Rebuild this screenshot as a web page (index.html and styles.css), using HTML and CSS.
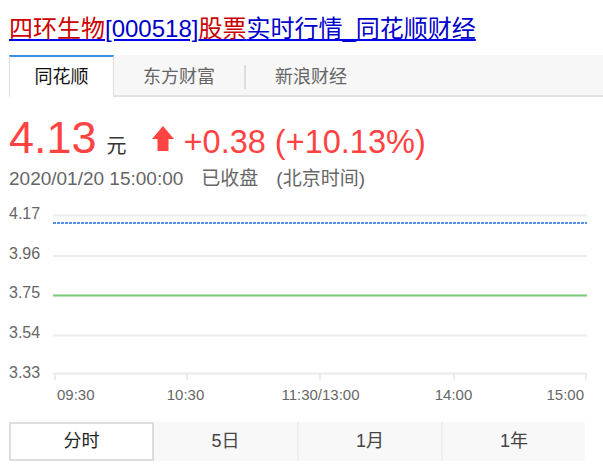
FILE: index.html
```html
<!DOCTYPE html>
<html lang="zh-CN">
<head>
<meta charset="utf-8">
<title>四环生物[000518]股票实时行情_同花顺财经</title>
<link rel="stylesheet" href="styles.css">
</head>
<body>
<div class="page">
  <div class="title-row"><a class="title" href="#"><span class="red">四环生物</span><span class="blue">[000518]</span><span class="red">股票</span><span class="blue">实时行情_同花顺财经</span></a></div>

  <div class="tabs">
    <div class="tab tab-active tab-1">同花顺</div>
    <div class="tab tab-2">东方财富</div>
    <div class="tab-sep"></div>
    <div class="tab tab-3">新浪财经</div>
  </div>

  <div class="price-row"><span class="price">4.13</span><span class="unit">元</span><svg class="arrow" width="22" height="25" viewBox="0 0 22 25"><path d="M11 0 L22 13 L16.5 13 L16.5 25 L5.5 25 L5.5 13 L0 13 Z" fill="#ff4343"/></svg><span class="change">+0.38 (+10.13%)</span></div>

  <div class="date-row"><span>2020/01/20 15:00:00</span><span class="gap">已收盘</span><span class="gap">(北京时间)</span></div>

  <svg class="chart" width="585" height="212" viewBox="0 0 585 212">
    <g class="grid">
      <line x1="44" y1="15.5" x2="578" y2="15.5"/>
      <line x1="44" y1="56" x2="578" y2="56"/>
      <line x1="44" y1="95.5" x2="578" y2="95.5"/>
      <line x1="44" y1="135.5" x2="578" y2="135.5"/>
      <line x1="44" y1="173.5" x2="578" y2="173.5"/>
      <line x1="46" y1="173" x2="46" y2="180"/>
      <line x1="178" y1="173" x2="178" y2="180"/>
      <line x1="311" y1="173" x2="311" y2="180"/>
      <line x1="445" y1="173" x2="445" y2="180"/>
      <line x1="577" y1="173" x2="577" y2="180"/>
    </g>
    <line class="limit" x1="44" y1="23" x2="578" y2="23"/>
    <line class="base" x1="44" y1="95.5" x2="578" y2="95.5"/>
    <g class="ylab">
      <text x="0" y="19">4.17</text>
      <text x="0" y="59">3.96</text>
      <text x="0" y="98">3.75</text>
      <text x="0" y="138">3.54</text>
      <text x="0" y="178">3.33</text>
    </g>
    <g class="xlab">
      <text x="48" y="200">09:30</text>
      <text x="176.5" y="200" text-anchor="middle">10:30</text>
      <text x="311.5" y="200" text-anchor="middle">11:30/13:00</text>
      <text x="444.5" y="200" text-anchor="middle">14:00</text>
      <text x="575" y="200" text-anchor="end">15:00</text>
    </g>
  </svg>

  <div class="periods">
    <div class="period period-active p1">分时</div>
    <div class="period p2">5日</div>
    <div class="period-sep"></div>
    <div class="period p3">1月</div>
    <div class="period-sep"></div>
    <div class="period p3">1年</div>
  </div>
</div>
</body>
</html>
```

FILE: styles.css
```css
html, body {
  margin: 0;
  padding: 0;
  background: #ffffff;
}
body {
  font-family: "Liberation Sans", Arial, "Noto Sans CJK SC", sans-serif;
  width: 603px;
  overflow: hidden;
}
.page {
  padding-left: 9px;
}
.title-row {
  padding-top: 14px;
  height: 30px;
  line-height: 30px;
  font-size: 24px;
  white-space: nowrap;
}
.title {
  text-decoration: underline;
}
.title .red {
  color: #cc0000;
}
.title .blue {
  color: #0000cc;
}

.tabs {
  margin-top: 11px;
  height: 40px;
  background: #f7f7f7;
  border-bottom: 2px solid #e2e2e2;
  display: flex;
  align-items: flex-start;
}
.tab {
  box-sizing: border-box;
  height: 42px;
  margin-bottom: -2px;
  border-top: 2px solid transparent;
  line-height: 41px;
  font-size: 18px;
  color: #666666;
  text-align: center;
  flex: none;
}
.tab-active {
  background: #ffffff;
  color: #111111;
  border-top: 2px solid #3b8fea;
  border-left: 1px solid #dddddd;
  border-right: 1px solid #dddddd;
}
.tab-1 { width: 105px; }
.tab-2 { width: 130px; }
.tab-3 { width: 130px; }
.tab-sep {
  flex: none;
  width: 2px;
  height: 24px;
  margin-top: 10px;
  background: #dedede;
}

.price-row {
  margin-top: 19px;
  height: 44px;
  line-height: 44px;
  white-space: nowrap;
  color: #ff4343;
}
.price {
  font-size: 45px;
}
.unit {
  font-size: 20px;
  color: #333333;
  margin-left: 10px;
}
.arrow {
  margin-left: 25px;
  vertical-align: 2px;
}
.change {
  font-size: 32.5px;
  margin-left: 10px;
}

.date-row {
  margin-top: 7px;
  height: 24px;
  line-height: 24px;
  font-size: 19px;
  color: #666666;
  white-space: nowrap;
}
.date-row .gap {
  margin-left: 18px;
}

.chart {
  display: block;
  margin-top: 9px;
  font-family: "Liberation Sans", Arial, sans-serif;
}
.grid line {
  stroke: #ebebeb;
  stroke-width: 2;
}
.limit {
  stroke: #5590ee;
  stroke-width: 2;
  stroke-dasharray: 3 1;
}
.base {
  stroke: #7ccc7c;
  stroke-width: 2;
}
.ylab text {
  font-size: 16px;
  fill: #666666;
}
.xlab text {
  font-size: 15px;
  fill: #666666;
}

.periods {
  margin-top: 10px;
  width: 576px;
  height: 39px;
  display: flex;
  background: #f8f8f8;
}
.period {
  box-sizing: border-box;
  flex: none;
  height: 39px;
  line-height: 39px;
  text-align: center;
  font-size: 18px;
  color: #444444;
}
.period-active {
  background: #ffffff;
  border: 2px solid #dddddd;
  line-height: 35px;
  color: #222222;
}
.p1 { width: 145px; }
.p2 { width: 143px; }
.p3 { width: 142px; }
.period-sep {
  flex: none;
  width: 2px;
  height: 39px;
  background: #eeeeee;
}
```
